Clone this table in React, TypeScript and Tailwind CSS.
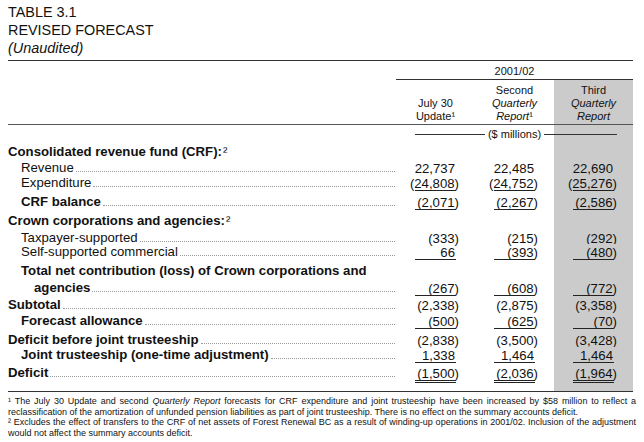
import type { ReactNode } from 'react';

type Line = 'single' | 'double';

interface Cell {
  v: string;
  line?: Line;
}

interface RowSpec {
  label: ReactNode;
  indent?: 'none' | 'one' | 'two';
  bold?: boolean;
  dots?: boolean;
  h: string;
  vals?: [Cell, Cell, Cell];
}

const GRID = 'grid grid-cols-[388px_79px_79px_79px]';
const SHADE = 'bg-[#cbcbcb]';

const INDENT = { none: 'pl-0', one: 'pl-[13px]', two: 'pl-[26px]' } as const;

const sup = (n: string) => <span className="ml-[1px] font-normal">{n}</span>;

const rows: RowSpec[] = [
  { label: <>Consolidated revenue fund (CRF):{sup('²')}</>, bold: true, h: 'h-[16px]' },
  {
    label: 'Revenue',
    indent: 'one',
    dots: true,
    h: 'h-[15px]',
    vals: [{ v: '22,737' }, { v: '22,485' }, { v: '22,690' }],
  },
  {
    label: 'Expenditure',
    indent: 'one',
    dots: true,
    h: 'h-[19px]',
    vals: [
      { v: '(24,808)', line: 'single' },
      { v: '(24,752)', line: 'single' },
      { v: '(25,276)', line: 'single' },
    ],
  },
  {
    label: 'CRF balance',
    indent: 'one',
    bold: true,
    dots: true,
    h: 'h-[19px]',
    vals: [
      { v: '(2,071)', line: 'single' },
      { v: '(2,267)', line: 'single' },
      { v: '(2,586)', line: 'single' },
    ],
  },
  { label: <>Crown corporations and agencies:{sup('²')}</>, bold: true, h: 'h-[17px]' },
  {
    label: 'Taxpayer-supported',
    indent: 'one',
    dots: true,
    h: 'h-[14px]',
    vals: [{ v: '(333)' }, { v: '(215)' }, { v: '(292)' }],
  },
  {
    label: 'Self-supported commercial',
    indent: 'one',
    dots: true,
    h: 'h-[19px]',
    vals: [
      { v: '66', line: 'single' },
      { v: '(393)', line: 'single' },
      { v: '(480)', line: 'single' },
    ],
  },
  { label: 'Total net contribution (loss) of Crown corporations and', indent: 'one', bold: true, h: 'h-[17px]' },
  {
    label: 'agencies',
    indent: 'two',
    bold: true,
    dots: true,
    h: 'h-[17px]',
    vals: [
      { v: '(267)', line: 'single' },
      { v: '(608)', line: 'single' },
      { v: '(772)', line: 'single' },
    ],
  },
  {
    label: 'Subtotal',
    bold: true,
    dots: true,
    h: 'h-[16px]',
    vals: [{ v: '(2,338)' }, { v: '(2,875)' }, { v: '(3,358)' }],
  },
  {
    label: 'Forecast allowance',
    indent: 'one',
    bold: true,
    dots: true,
    h: 'h-[19px]',
    vals: [
      { v: '(500)', line: 'single' },
      { v: '(625)', line: 'single' },
      { v: '(70)', line: 'single' },
    ],
  },
  {
    label: 'Deficit before joint trusteeship',
    bold: true,
    dots: true,
    h: 'h-[15px]',
    vals: [{ v: '(2,838)' }, { v: '(3,500)' }, { v: '(3,428)' }],
  },
  {
    label: 'Joint trusteeship (one-time adjustment)',
    indent: 'one',
    bold: true,
    dots: true,
    h: 'h-[18px]',
    vals: [
      { v: '1,338', line: 'single' },
      { v: '1,464', line: 'single' },
      { v: '1,464', line: 'single' },
    ],
  },
  {
    label: 'Deficit',
    bold: true,
    dots: true,
    h: 'h-[27px] border-b border-[#333]',
    vals: [
      { v: '(1,500)', line: 'double' },
      { v: '(2,036)', line: 'double' },
      { v: '(1,964)', line: 'double' },
    ],
  },
];

function Amount({ cell, shaded }: { cell?: Cell; shaded?: boolean }) {
  if (!cell) return <div className={shaded ? SHADE : ''} />;
  const neg = cell.v.startsWith('(');
  const rule =
    cell.line === 'double'
      ? 'h-[3px] border-y border-[#222]'
      : cell.line === 'single'
        ? 'h-0 border-b border-[#222]'
        : 'h-0';
  return (
    <div className={`flex flex-col items-end pr-[20px] pt-[2px] ${shaded ? SHADE : ''}`}>
      <span className={`leading-[13px] ${neg ? 'mr-[-4px]' : ''}`}>{cell.v}</span>
      <div className={`mr-[-1px] w-[41px] ${rule}`} />
    </div>
  );
}

function Row({ row }: { row: RowSpec }) {
  return (
    <div className={`${GRID} ${row.h}`}>
      <div className={`flex items-baseline leading-[16px] ${INDENT[row.indent ?? 'none']} ${row.bold ? 'font-bold' : ''}`}>
        <span className="whitespace-nowrap">{row.label}</span>
        {row.dots ? <span className="ml-[2px] mr-[1px] h-0 flex-1 border-b border-dotted border-[#999]" /> : null}
      </div>
      <Amount cell={row.vals?.[0]} />
      <Amount cell={row.vals?.[1]} />
      <Amount cell={row.vals?.[2]} shaded />
    </div>
  );
}

export default function App() {
  return (
    <div className="h-[442px] w-[644px] overflow-hidden bg-white font-['Liberation_Sans',Arial,sans-serif] text-[13.2px] text-[#111]">
      <div className="h-[60px] pl-[8px] pt-[3px] text-[14.4px] leading-[18px]">
        <div>TABLE 3.1</div>
        <div>REVISED FORECAST</div>
        <div className="italic">(Unaudited)</div>
      </div>

      <div className="ml-[8px] w-[625px] border-t border-[#333]">
        <div className={`${GRID} h-[19px]`}>
          <div />
          <div className="col-span-3 border-b border-[#333] pt-[4px] text-center text-[11px] leading-[12px]">
            2001/02
          </div>
        </div>

        <div className={`${GRID} h-[45px] border-b border-[#555] text-[11px] leading-[13px]`}>
          <div />
          <div className="flex flex-col items-center justify-end pb-[1px]">
            <span>July 30</span>
            <span>Update¹</span>
          </div>
          <div className="flex flex-col items-center justify-end pb-[1px]">
            <span>Second</span>
            <span className="italic">Quarterly</span>
            <span>
              <span className="italic">Report</span>¹
            </span>
          </div>
          <div className={`flex flex-col items-center justify-end pb-[1px] ${SHADE}`}>
            <span>Third</span>
            <span className="italic">Quarterly</span>
            <span className="italic">Report</span>
          </div>
        </div>

        <div className={`${GRID} h-[19px] text-[11px]`}>
          <div />
          <div className="flex items-center pl-[19px]">
            <div className="flex-1 border-t border-[#333]" />
          </div>
          <div className="flex items-center gap-[3px]">
            <div className="flex-1 border-t border-[#333]" />
            <span>($ millions)</span>
            <div className="flex-1 border-t border-[#333]" />
          </div>
          <div className={`flex items-center pr-[16px] ${SHADE}`}>
            <div className="flex-1 border-t border-[#333]" />
          </div>
        </div>

        {rows.map((row, i) => (
          <Row key={i} row={row} />
        ))}
      </div>

      <div className="ml-[8px] w-[628px] pt-[4px] text-[9px] leading-[10.5px]">
        <div className="text-justify [text-align-last:justify]">
          ¹ The July 30 Update and second <span className="italic">Quarterly Report</span> forecasts for CRF expenditure
          and joint trusteeship have been increased by $58 million to reflect a
        </div>
        <div>
          reclassification of the amortization of unfunded pension liabilities as part of joint trusteeship. There is no
          effect on the summary accounts deficit.
        </div>
        <div className="text-justify [text-align-last:justify]">
          ² Excludes the effect of transfers to the CRF of net assets of Forest Renewal BC as a result of winding-up
          operations in 2001/02. Inclusion of the adjustment
        </div>
        <div>would not affect the summary accounts deficit.</div>
      </div>
    </div>
  );
}
